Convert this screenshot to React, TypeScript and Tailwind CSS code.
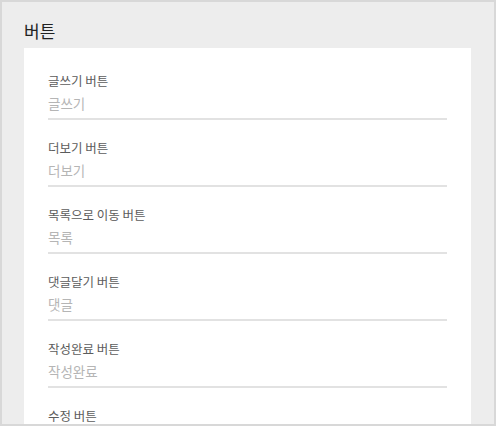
import React from "react";

const rows = [
  ["글쓰기 버튼", "글쓰기"],
  ["더보기 버튼", "더보기"],
  ["목록으로 이동 버튼", "목록"],
  ["댓글달기 버튼", "댓글"],
  ["작성완료 버튼", "작성완료"],
  ["수정 버튼", "수정"],
];

export default function App() {
  return (
    <div
      className="w-[496px] h-[426px] overflow-hidden border-2 border-[#d8d8d8] bg-[#ededed]"
      style={{ fontFamily: '"Noto Sans CJK KR", "Noto Sans", sans-serif' }}
    >
      <div className="pl-[22px] pr-[23px] pt-[17px]">
        <h2 className="text-[17px] leading-[24px] text-[#222] font-normal">버튼</h2>
        <div className="mt-[5px] bg-white px-[24px] pt-[24px]">
          {rows.map(([label, value]) => (
            <div key={label} className="h-[67px]">
              <div className="text-[12.5px] leading-[18px] text-[#5c5c5c]">{label}</div>
              <div className="mt-[4px] text-[13.5px] leading-[18px] text-[#b5b5b5]">{value}</div>
              <div className="mt-[6px] h-[2px] bg-[#e2e2e2]" />
            </div>
          ))}
        </div>
      </div>
    </div>
  );
}
